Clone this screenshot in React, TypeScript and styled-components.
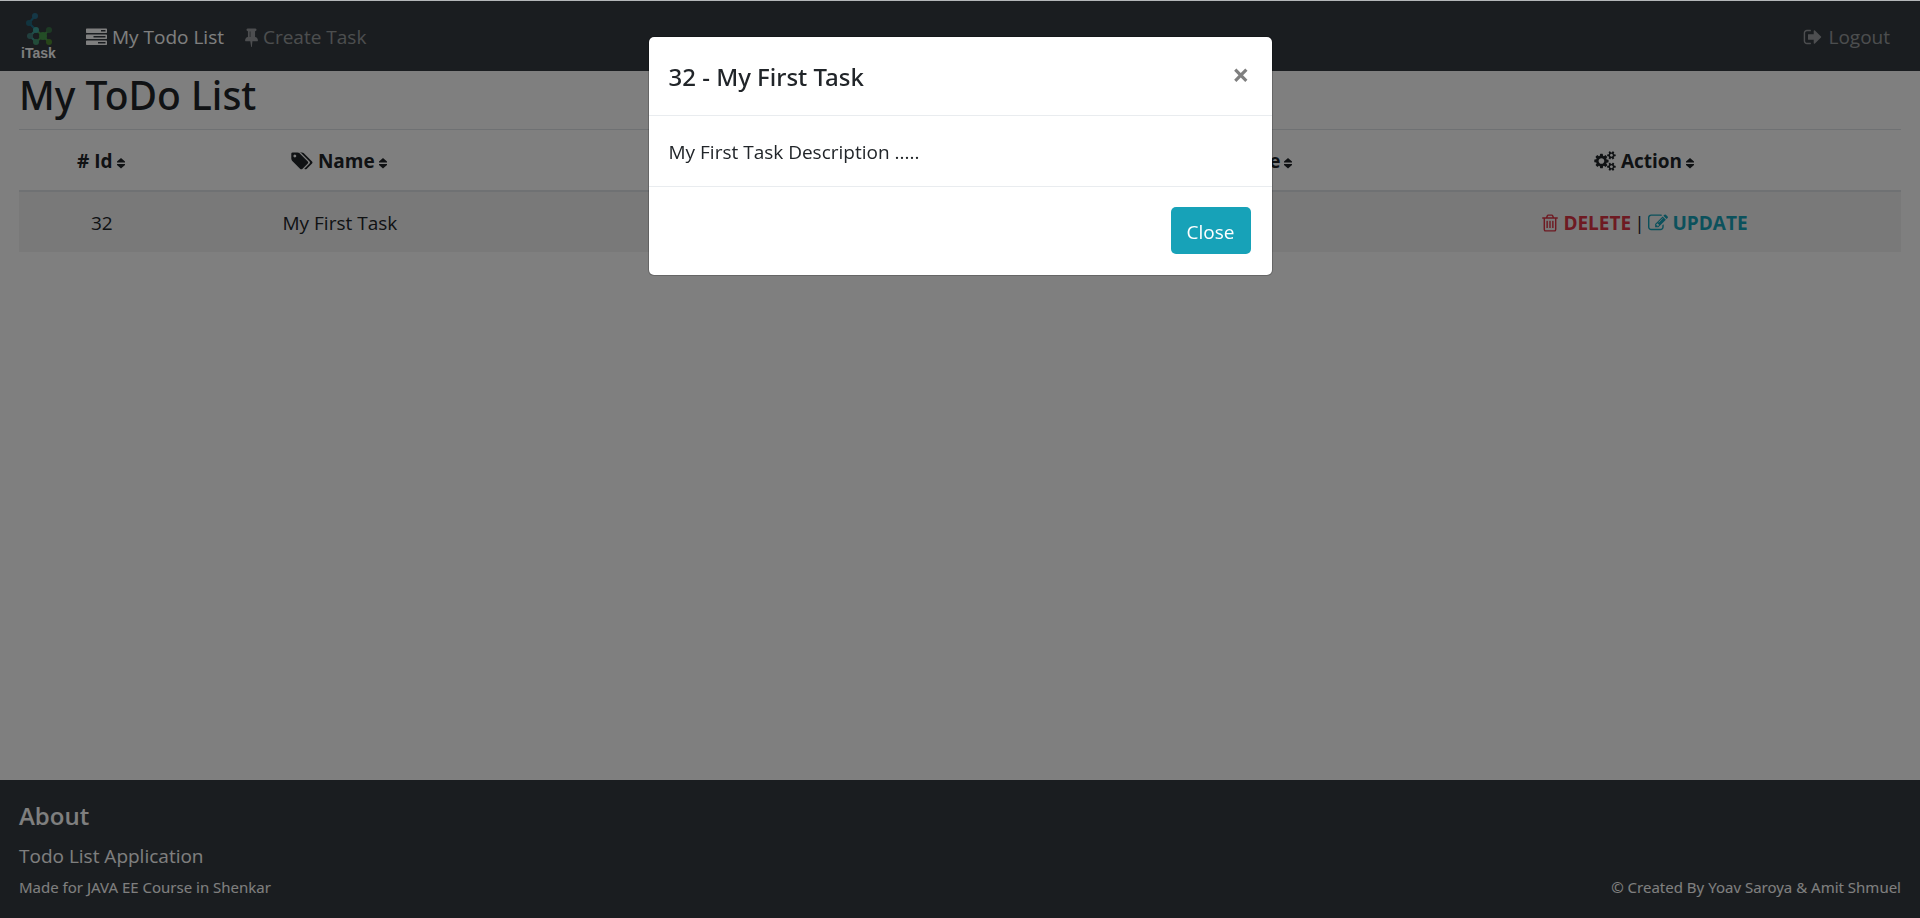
import React from 'react';
import styled, { createGlobalStyle, css } from 'styled-components';

const GlobalStyle = createGlobalStyle`
  *, *::before, *::after { box-sizing: border-box; }
  body {
    margin: 0;
    background: #fff;
    color: #212529;
    font-family: 'Open Sans', 'Noto Sans', sans-serif;
    font-size: 19px;
    font-weight: 400;
    line-height: 30px;
  }
`;

const Page = styled.div`
  display: flex;
  flex-direction: column;
  min-height: 100vh;
  border-top: 1px solid #fff;
`;

const Navbar = styled.nav`
  display: flex;
  align-items: center;
  height: 70px;
  padding: 2px 20px 0;
  background: #343a40;
`;

const Brand = styled.a`
  display: flex;
  margin-right: 26px;
`;

const LogoText = styled.text`
  font-family: 'Liberation Sans', sans-serif;
  font-size: 14px;
  font-weight: 700;
  fill: #fff;
`;

const NavLink = styled.a<{ $active?: boolean }>`
  display: flex;
  align-items: center;
  gap: 5px;
  margin-right: 21px;
  color: ${(p) => (p.$active ? '#fff' : 'rgba(255, 255, 255, 0.5)')};
  text-decoration: none;

  &:last-child {
    margin: 0 10px 0 auto;
  }
`;

const Content = styled.main`
  flex: 1;
  padding: 0 19px;
`;

const Title = styled.h1`
  margin: 0;
  padding-bottom: 10px;
  border-bottom: 1px solid #dee2e6;
  font-family: 'Noto Sans', sans-serif;
  font-size: 39px;
  font-weight: 500;
  line-height: 48px;
`;

const Table = styled.table`
  width: 100%;
  border-collapse: collapse;
  table-layout: fixed;
  text-align: center;
`;

/* Column share in thousandths of the table width. */
const Col = styled.col<{ $share: number }>`
  width: ${(p) => p.$share / 10}%;
`;

const cell = css`
  height: 61px;
  padding: 2px 0 0;
`;

const HeadCell = styled.th`
  ${cell}
  border-bottom: 2px solid #dee2e6;
  font-weight: 700;
  cursor: pointer;
`;

const Cell = styled.td`
  ${cell}
  background: #f2f2f2;
`;

const ActionLink = styled.a<{ $tone: string }>`
  color: ${(p) => p.$tone};
  font-weight: 700;
  text-decoration: none;
`;

const Divider = styled.span`
  margin: 0 3px;
`;

const Footer = styled.footer`
  display: flex;
  justify-content: space-between;
  align-items: flex-end;
  padding: 21px 19px 16px;
  background: #343a40;
  color: #fff;
`;

const FooterTitle = styled.h5`
  margin: 0 0 10px;
  font-size: 24px;
  font-weight: 600;
  line-height: 30px;
`;

const FooterText = styled.p`
  margin: 0 0 1px;
`;

const Small = styled.small`
  display: block;
  font-family: 'Noto Sans', sans-serif;
  font-size: 15px;
`;

const Backdrop = styled.div`
  position: fixed;
  inset: 0;
  padding: 35px 20px;
  border-top: 1px solid #b4b7b9;
  background: rgba(0, 0, 0, 0.5);
`;

const Dialog = styled.div`
  max-width: 625px;
  margin: 0 auto;
  border: 1px solid rgba(0, 0, 0, 0.2);
  border-radius: 6px;
  background: #fff;
  background-clip: padding-box;
`;

const DialogHeader = styled.header`
  display: flex;
  justify-content: space-between;
  align-items: flex-start;
  height: 79px;
  padding: 21px 20px 19px;
  border-bottom: 1px solid #e9ecef;
`;

const DialogTitle = styled.h5`
  margin: 0;
  font-family: 'Noto Sans', sans-serif;
  font-size: 24px;
  font-weight: 500;
  line-height: 38px;
`;

const CloseIcon = styled.button`
  padding: 0 2px;
  border: 0;
  background: none;
  color: #7f7f7f;
  font: 700 30px/34px 'Open Sans', sans-serif;
  cursor: pointer;
`;

const DialogBody = styled.p`
  margin: 0;
  padding: 21px 20px 19px;
`;

const DialogFooter = styled.footer`
  display: flex;
  justify-content: flex-end;
  padding: 20px 21px 21px;
  border-top: 1px solid #e9ecef;
`;

const CloseButton = styled.button`
  height: 47px;
  padding: 2px 16px 0;
  border: 0;
  border-radius: 5px;
  background: #17a2b8;
  color: #fff;
  font: inherit;
  cursor: pointer;
`;

const Glyph = styled.svg`
  flex: none;
  fill: currentColor;
  vertical-align: -3px;
`;

const SortGlyph = styled(Glyph)`
  margin-left: 2px;
  vertical-align: -2px;
`;

const paths = {
  tasks:
    'M1024 1408h640v-128h-640v128zm-384-512h1024v-128h-1024v128zm640-512h384v-128h-384v128zm512 832v256q0 26-19 45t-45 19h-1664q-26 0-45-19t-19-45v-256q0-26 19-45t45-19h1664q26 0 45 19t19 45zm0-512v256q0 26-19 45t-45 19h-1664q-26 0-45-19t-19-45v-256q0-26 19-45t45-19h1664q26 0 45 19t19 45zm0-512v256q0 26-19 45t-45 19h-1664q-26 0-45-19t-19-45v-256q0-26 19-45t45-19h1664q26 0 45 19t19 45z',
  tack:
    'M800 864v-448q0-14-9-23t-23-9-23 9-9 23v448q0 14 9 23t23 9 23-9 9-23zm672 352q0 26-19 45t-45 19h-429l-51 483q-2 12-10.5 20.5t-20.5 8.5h-1q-27 0-32-27l-76-485h-404q-26 0-45-19t-19-45q0-123 78.5-221.5t177.5-98.5v-512q-52 0-90-38t-38-90 38-90 90-38h640q52 0 90 38t38 90-38 90-90 38v512q99 0 177.5 98.5t78.5 221.5z',
  signOut:
    'M704 1440q0 4 1 20t.5 26.5-3 23.5-10 19.5-20.5 6.5h-320q-119 0-203.5-84.5t-84.5-203.5v-704q0-119 84.5-203.5t203.5-84.5h320q13 0 22.5 9.5t9.5 22.5q0 4 1 20t.5 26.5-3 23.5-10 19.5-20.5 6.5h-320q-66 0-113 47t-47 113v704q0 66 47 113t113 47h312l11.5 1 11.5 3 8 5.5 7 9 2 13.5zm928-544q0 26-19 45l-544 544q-19 19-45 19t-45-19-19-45v-288h-448q-26 0-45-19t-19-45v-384q0-26 19-45t45-19h448v-288q0-26 19-45t45-19 45 19l544 544q19 19 19 45z',
  tags:
    'M448 448q0-53-37.5-90.5t-90.5-37.5-90.5 37.5-37.5 90.5 37.5 90.5 90.5 37.5 90.5-37.5 37.5-90.5zm1067 576q0 53-37 90l-491 492q-39 37-91 37-53 0-90-37l-715-716q-38-37-64.5-101t-26.5-117v-416q0-52 38-90t90-38h416q53 0 117 26.5t102 64.5l715 714q37 39 37 91zm384 0q0 53-37 90l-491 492q-39 37-91 37-36 0-59-14t-53-45l470-470q37-37 37-90 0-52-37-91l-715-714q-38-38-102-64.5t-117-26.5h224q53 0 117 26.5t102 64.5l715 714q37 39 37 91z',
  cogs:
    'M896 896q0-106-75-181t-181-75-181 75-75 181 75 181 181 75 181-75 75-181zm768 512q0-52-38-90t-90-38-90 38-38 90q0 53 37.5 90.5t90.5 37.5 90.5-37.5 37.5-90.5zm0-1024q0-52-38-90t-90-38-90 38-38 90q0 53 37.5 90.5t90.5 37.5 90.5-37.5 37.5-90.5zm-384 421v185q0 10-7 19.5t-16 10.5l-155 24q-11 35-32 76 34 48 90 115 7 11 7 20 0 12-7 19-23 30-82.5 89.5t-78.5 59.5q-11 0-21-7l-115-90q-37 19-77 31-11 108-23 155-7 24-30 24h-186q-11 0-20-7.5t-10-17.5l-23-153q-34-10-75-31l-118 89q-7 7-20 7-11 0-21-8-144-133-144-160 0-9 7-19 10-14 41-53t47-61q-23-44-35-82l-152-24q-10-1-17-9.5t-7-19.5v-185q0-10 7-19.5t16-10.5l155-24q11-35 32-76-34-48-90-115-7-11-7-20 0-12 7-20 22-30 82-89t79-59q11 0 21 7l115 90q34-18 77-32 11-108 23-154 7-24 30-24h186q11 0 20 7.5t10 17.5l23 153q34 10 75 31l118-89q8-7 20-7 11 0 21 8 144 133 144 160 0 8-7 19-12 16-42 54t-45 60q23 48 34 82l152 23q10 2 17 10.5t7 19.5zm640 533v140q0 16-149 31-12 27-30 52 51 113 51 138 0 4-4 7-122 71-124 71-8 0-46-47t-52-68q-20 2-30 2t-30-2q-14 21-52 68t-46 47q-2 0-124-71-4-3-4-7 0-25 51-138-18-25-30-52-149-15-149-31v-140q0-16 149-31 13-29 30-52-51-113-51-138 0-4 4-7 4-2 35-20t59-34 30-16q8 0 46 46.5t52 67.5q20-2 30-2t30 2q51-71 92-112l6-2q4 0 124 70 4 3 4 7 0 25-51 138 17 23 30 52 149 15 149 31zm0-1024v140q0 16-149 31-12 27-30 52 51 113 51 138 0 4-4 7-122 71-124 71-8 0-46-47t-52-68q-20 2-30 2t-30-2q-14 21-52 68t-46 47q-2 0-124-71-4-3-4-7 0-25 51-138-18-25-30-52-149-15-149-31v-140q0-16 149-31 13-29 30-52-51-113-51-138 0-4 4-7 4-2 35-20t59-34 30-16q8 0 46 46.5t52 67.5q20-2 30-2t30 2q51-71 92-112l6-2q4 0 124 70 4 3 4 7 0 25-51 138 17 23 30 52 149 15 149 31z',
  trash:
    'M704 736v576q0 14-9 23t-23 9h-64q-14 0-23-9t-9-23v-576q0-14 9-23t23-9h64q14 0 23 9t9 23zm256 0v576q0 14-9 23t-23 9h-64q-14 0-23-9t-9-23v-576q0-14 9-23t23-9h64q14 0 23 9t9 23zm256 0v576q0 14-9 23t-23 9h-64q-14 0-23-9t-9-23v-576q0-14 9-23t23-9h64q14 0 23 9t9 23zm128 724v-948h-896v948q0 22 7 40.5t14.5 27 10.5 8.5h832q3 0 10.5-8.5t14.5-27 7-40.5zm-672-1076h448l-48-117q-7-9-17-11h-317q-10 2-17 11zm928 32v64q0 14-9 23t-23 9h-96v948q0 83-47 143.5t-113 60.5h-832q-66 0-113-58.5t-47-141.5v-952h-96q-14 0-23-9t-9-23v-64q0-14 9-23t23-9h309l70-167q15-37 54-63t79-26h320q40 0 79 26t54 63l70 167h309q14 0 23 9t9 23z',
  edit:
    'M888 1184l116-116-152-152-116 116v56h96v96h56zm440-720q-16-16-33 1l-350 350q-17 17-1 33t33-1l350-350q17-17 1-33zm80 594v190q0 119-84.5 203.5t-203.5 84.5h-832q-119 0-203.5-84.5t-84.5-203.5v-832q0-119 84.5-203.5t203.5-84.5h832q63 0 117 25 15 7 18 23 3 17-9 29l-49 49q-14 14-32 8-23-6-45-6h-832q-66 0-113 47t-47 113v832q0 66 47 113t113 47h832q66 0 113-47t47-113v-126q0-13 9-22l64-64q15-15 35-7t20 29zm-96-738l288 288-672 672h-288v-288zm444 132l-92 92-288-288 92-92q28-28 68-28t68 28l152 152q28 28 28 68t-28 68z',
};

type IconProps = { name: keyof typeof paths; box?: string; width?: number; height?: number };

const Icon = ({ name, box = '0 0 1792 1792', width = 20, height = 20 }: IconProps) => (
  <Glyph viewBox={box} width={width} height={height} aria-hidden="true">
    <path d={paths[name]} />
  </Glyph>
);

const SortIcon = () => (
  <SortGlyph viewBox="0 0 12 14" width="12" height="14" aria-hidden="true">
    <path d="M6 2L10 5.500V6.500H2V5.500ZM2 8H10V9L6 12.500L2 9Z" />
  </SortGlyph>
);

const Logo = () => (
  <svg width="40" height="50" viewBox="0 0 40 50" role="img" aria-label="iTask">
    <g strokeWidth="2" fill="none">
      <path d="M15 4L9 11L16 18" stroke="#1f6f8c" />
      <path d="M16 18L10 24L16 30" stroke="#3f9c94" />
      <path d="M16 18L23 24L29 18M16 30L23 24L29 30" stroke="#4d9a55" />
    </g>
    <circle cx="15" cy="4" r="3" fill="#2a6f8c" />
    <circle cx="9" cy="11" r="3" fill="#23687f" />
    <circle cx="16" cy="18" r="3" fill="#3fa59c" />
    <circle cx="10" cy="24" r="3" fill="#437f7c" />
    <circle cx="16" cy="30" r="3" fill="#459672" />
    <circle cx="23" cy="24" r="4" fill="#479a4c" />
    <circle cx="29" cy="18" r="3" fill="#3b7549" />
    <circle cx="29" cy="30" r="3" fill="#4e8a32" />
    <LogoText x="1" y="46">iTask</LogoText>
  </svg>
);

export default function App() {
  return (
    <>
      <GlobalStyle />
      <Page>
        <Navbar>
          <Brand href="#"><Logo /></Brand>
          <NavLink href="#list" $active><Icon name="tasks" width={21} height={21} />My Todo List</NavLink>
          <NavLink href="#create"><Icon name="tack" box="320 0 1152 1792" width={13} />Create Task</NavLink>
          <NavLink href="#logout"><Icon name="signOut" />Logout</NavLink>
        </Navbar>
        <Content>
          <Title>My ToDo List</Title>
          <Table>
            <colgroup>
              <Col $share={88} /><Col $share={165} /><Col $share={297} /><Col $share={178} /><Col $share={272} />
            </colgroup>
            <thead>
              <tr>
                <HeadCell># Id<SortIcon /></HeadCell>
                <HeadCell><Icon name="tags" box="0 0 1920 1792" width={22} /> Name<SortIcon /></HeadCell>
                <HeadCell />
                <HeadCell>Creation Date<SortIcon /></HeadCell>
                <HeadCell><Icon name="cogs" box="0 0 1920 1792" width={22} /> Action<SortIcon /></HeadCell>
              </tr>
            </thead>
            <tbody>
              <tr>
                <Cell>32</Cell>
                <Cell>My First Task</Cell>
                <Cell />
                <Cell />
                <Cell>
                  <ActionLink href="#delete" $tone="#dc3545"><Icon name="trash" box="192 0 1408 1792" width={16} /> DELETE</ActionLink>
                  <Divider>|</Divider>
                  <ActionLink href="#update" $tone="#17a2b8"><Icon name="edit" /> UPDATE</ActionLink>
                </Cell>
              </tr>
            </tbody>
          </Table>
        </Content>
        <Footer>
          <div>
            <FooterTitle>About</FooterTitle>
            <FooterText>Todo List Application</FooterText>
            <Small>Made for JAVA EE Course in Shenkar</Small>
          </div>
          <Small>© Created By Yoav Saroya &amp; Amit Shmuel</Small>
        </Footer>
      </Page>
      <Backdrop>
        <Dialog role="dialog" aria-modal="true" aria-labelledby="task-title">
          <DialogHeader>
            <DialogTitle id="task-title">32 - My First Task</DialogTitle>
            <CloseIcon aria-label="Close dialog">×</CloseIcon>
          </DialogHeader>
          <DialogBody>My First Task Description .....</DialogBody>
          <DialogFooter>
            <CloseButton>Close</CloseButton>
          </DialogFooter>
        </Dialog>
      </Backdrop>
    </>
  );
}
